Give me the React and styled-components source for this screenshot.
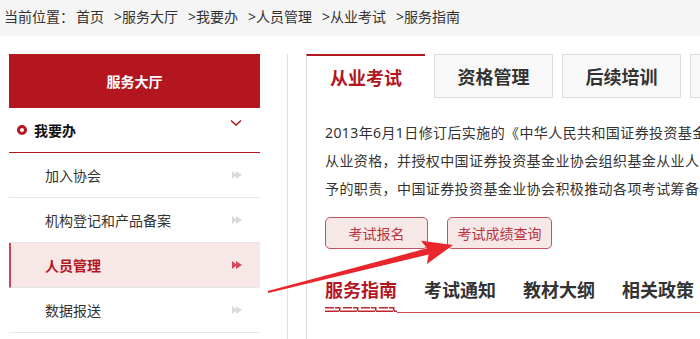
import React from 'react';
import styled, { createGlobalStyle } from 'styled-components';

const GlobalStyle = createGlobalStyle`
  html, body {
    margin: 0;
    padding: 0;
    background: #ffffff;
    font-family: "Noto Sans", "Noto Sans CJK SC", sans-serif;
    overflow: hidden;
  }
`;

const RED = '#b3161f';

const Page = styled.div`
  position: relative;
  width: 700px;
  height: 339px;
  overflow: hidden;
`;

const Crumbs = styled.div`
  height: 36px;
  display: flex;
  align-items: center;
  padding: 0 0 4px 4px;
  box-sizing: border-box;
  background: #f5f5f5;
  font-size: 14px;
  color: #333;
  white-space: nowrap;
`;

const Crumb = styled.span`
  margin-left: ${p => (p.$sep ? '10px' : '2px')};
`;

const Main = styled.div`
  display: flex;
  padding: 18px 0 0 9px;
`;

const Sidebar = styled.div`
  width: 251px;
  flex-shrink: 0;
`;

const SideHead = styled.div`
  height: 54px;
  background: ${RED};
  color: #fff;
  font-size: 14px;
  font-weight: bold;
  display: flex;
  align-items: center;
  justify-content: center;
`;

const GroupRow = styled.div`
  height: 44px;
  border-bottom: 1px solid ${RED};
  display: flex;
  align-items: center;
  padding-left: 8px;
  font-size: 14px;
  font-weight: bold;
  color: #111;
`;

const Dot = styled.span`
  width: 4px;
  height: 4px;
  border: 3.5px solid ${RED};
  border-radius: 50%;
  background: #fff;
  margin-right: 7px;
`;

const Chevron = styled.svg`
  margin-left: auto;
  margin-right: 18px;
  margin-top: -14px;
`;

const Item = styled.div`
  height: 44px;
  border-bottom: 1px solid #e6e6e6;
  display: flex;
  align-items: center;
  padding-left: ${p => (p.$active ? '34px' : '36px')};
  border-left: ${p => (p.$active ? `2px solid #c44a54` : 'none')};
  background: ${p => (p.$active ? '#f8e7e7' : '#fff')};
  color: ${p => (p.$active ? RED : '#333')};
  font-weight: ${p => (p.$active ? 'bold' : 'normal')};
  font-size: 14px;
`;

const Arrow = styled.svg`
  margin-left: auto;
  margin-right: 17px;
`;

const Divider = styled.div`
  width: 1px;
  background: #e0e0e0;
  margin-left: 27px;
  height: 300px;
  flex-shrink: 0;
`;

const Content = styled.div`
  margin-left: 18px;
  flex: 1;
  min-width: 0;
`;

const Tabs = styled.div`
  display: flex;
  gap: 9px;
  height: 44px;
`;

const Tab = styled.div`
  width: 119px;
  box-sizing: border-box;
  flex-shrink: 0;
  display: flex;
  align-items: center;
  justify-content: center;
  font-size: 18px;
  font-weight: bold;
  color: ${p => (p.$active ? RED : '#333')};
  background: ${p => (p.$active ? '#fff' : '#f8f8f8')};
  border: 1px solid #dcdcdc;
  border-top: ${p => (p.$active ? `2px solid ${RED}` : '1px solid #dcdcdc')};
  border-bottom: ${p => (p.$active ? 'none' : '1px solid #dcdcdc')};
  border-right: ${p => (p.$active ? 'none' : '1px solid #dcdcdc')};
`;

const Body = styled.div`
  border-left: 1px solid #dcdcdc;
  padding: 21px 0 0 18px;
  height: 260px;
`;

const Para = styled.p`
  margin: 0;
  font-size: 14px;
  line-height: 28px;
  letter-spacing: 0.4px;
  color: #333;
  white-space: nowrap;
`;

const Buttons = styled.div`
  display: flex;
  gap: 19px;
  margin-top: 14px;
`;

const Btn = styled.div`
  height: 30px;
  width: ${p => p.$w}px;
  border: 1px solid #c4545c;
  border-radius: 5px;
  background: #f7e8e8;
  color: #b8333d;
  font-size: 14px;
  display: flex;
  align-items: center;
  justify-content: center;
`;

const SubTabs = styled.div`
  display: flex;
  gap: 27px;
  margin-top: 28px;
  height: 35px;
  border-bottom: 1px solid #d24a52;
`;

const SubTab = styled.div`
  font-size: 18px;
  line-height: 26px;
  font-weight: bold;
  white-space: nowrap;
  color: ${p => (p.$active ? RED : '#333')};
  position: relative;
`;

const Ornament = styled.svg`
  position: absolute;
  left: 0;
  top: 30px;
  background: #fff;
  display: block;
`;

const Overlay = styled.svg`
  position: absolute;
  left: 0;
  top: 0;
  pointer-events: none;
`;

const DoubleArrow = ({ color }) => (
  <Arrow width="11" height="10" viewBox="0 0 11 10">
    <path d="M0 1 L5 5 L0 9 Z M4 1 L10 5 L4 9 Z" fill={color} />
  </Arrow>
);

const crumbs = ['首页', '服务大厅', '我要办', '人员管理', '从业考试', '服务指南'];
const items = ['加入协会', '机构登记和产品备案', '人员管理', '数据报送'];

export default function App() {
  // arrow polygon along (268,292) -> (453,245)
  const S = [268, 292];
  const T = [453, 245];
  const dx = T[0] - S[0];
  const dy = T[1] - S[1];
  const len = Math.hypot(dx, dy);
  const u = [dx / len, dy / len];
  const n = [-u[1], u[0]];
  const at = (base, a, b) => [base[0] + u[0] * a + n[0] * b, base[1] + u[1] * a + n[1] * b];
  const B = at(T, -30, 0);
  const pts = [
    at(S, 0, -0.9),
    at(B, 4, -3.2),
    at(B, 0, -12),
    T,
    at(B, 0, 12),
    at(B, 4, 3.2),
    at(S, 0, 0.9),
  ]
    .map(p => p.map(v => v.toFixed(1)).join(','))
    .join(' ');

  return (
    <Page>
      <GlobalStyle />
      <Crumbs>
        当前位置：
        {crumbs.map((c, i) => (
          <Crumb key={c} $sep={i > 0}>
            {i > 0 ? '>' : ''}
            {c}
          </Crumb>
        ))}
      </Crumbs>
      <Main>
        <Sidebar>
          <SideHead>服务大厅</SideHead>
          <GroupRow>
            <Dot />
            我要办
            <Chevron width="12" height="8" viewBox="0 0 12 8">
              <path d="M1 1.5 L6 6 L11 1.5" stroke={RED} strokeWidth="1.6" fill="none" />
            </Chevron>
          </GroupRow>
          {items.map(t => (
            <Item key={t} $active={t === '人员管理'}>
              {t}
              <DoubleArrow color={t === '人员管理' ? '#d7465a' : '#dadada'} />
            </Item>
          ))}
        </Sidebar>
        <Divider />
        <Content>
          <Tabs>
            <Tab $active>从业考试</Tab>
            <Tab>资格管理</Tab>
            <Tab>后续培训</Tab>
            <Tab>自律管理</Tab>
          </Tabs>
          <Body>
            <Para>
              2013年6月1日修订后实施的《中华人民共和国证券投资基金法》规定基金从业人员应当具备基金
              <br />
              从业资格，并授权中国证券投资基金业协会组织基金从业人员的从业考试、资质管理和业务培训。为履行法律赋
              <br />
              予的职责，中国证券投资基金业协会积极推动各项考试筹备工作。
            </Para>
            <Buttons>
              <Btn $w={101}>考试报名</Btn>
              <Btn $w={103}>考试成绩查询</Btn>
            </Buttons>
            <SubTabs>
              <SubTab $active>
                服务指南
                <Ornament width="72" height="6" viewBox="0 0 72 6">
                  {[0, 18, 36, 54].map(x => (
                    <g key={x} fill="#c0262f">
                      <rect x={x} y="0" width="9" height="1.5" />
                      <rect x={x + 10} y="0" width="5" height="1.5" />
                      <rect x={x + 14} y="0" width="1.5" height="4" />
                      <rect x={x} y="3.5" width="14" height="1.5" />
                      <rect x={x + 15} y="3.5" width="3" height="1.5" />
                    </g>
                  ))}
                </Ornament>
              </SubTab>
              <SubTab>考试通知</SubTab>
              <SubTab>教材大纲</SubTab>
              <SubTab>相关政策</SubTab>
            </SubTabs>
          </Body>
        </Content>
      </Main>
      <Overlay width="700" height="339" viewBox="0 0 700 339">
        <polygon points={pts} fill="#e8262b" />
      </Overlay>
    </Page>
  );
}
